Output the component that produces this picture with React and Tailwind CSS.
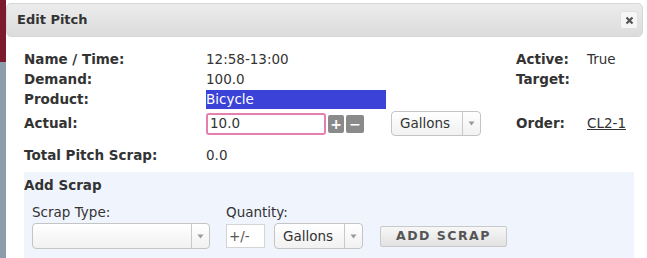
const font = { fontFamily: '"DejaVu Sans", Verdana, sans-serif' };

const Caret = () => (
  <div className="flex w-[18px] items-center justify-center self-stretch border-l border-[#c8c8c8]">
    <svg width="7" height="5" viewBox="0 0 7 5">
      <path d="M0.5 0.5h6L3.5 4.5z" fill="#9a9a9a" />
    </svg>
  </div>
);

const Select = ({ label, className }) => (
  <div
    className={`flex items-center rounded-[4px] border border-[#c4c4c4] bg-gradient-to-b from-white to-[#f1f1f1] ${className}`}
  >
    <span className="flex-1 pl-[8px] text-[13.5px] text-[#333]">{label}</span>
    <Caret />
  </div>
);

export default function App() {
  return (
    <div className="flex h-[258px] w-[647px] overflow-hidden bg-white" style={font}>
      {/* page behind the dialog */}
      <div className="flex w-[6px] flex-col">
        <div className="h-[62px] bg-[#7c1b2c]" />
        <div className="flex-1 bg-[#8d9cab]" />
      </div>

      <div className="flex flex-1 flex-col bg-white pt-[3px] pr-[4px]">
        {/* title bar */}
        <div className="flex h-[34px] items-center justify-between rounded-[5px] border border-[#d6d6d6] bg-gradient-to-b from-[#ececec] to-[#dcdcdc] pl-[10px] pr-[4px]">
          <span className="text-[13px] font-bold text-[#333]">Edit Pitch</span>
          <button className="flex h-[18px] w-[18px] items-center justify-center rounded-[3px] border border-[#e0e0e0] bg-[#f6f6f6]">
            <svg width="9" height="9" viewBox="0 0 9 9">
              <path d="M1.5 1.5l6 6M7.5 1.5l-6 6" stroke="#555" strokeWidth="2.2" />
            </svg>
          </button>
        </div>

        {/* info grid */}
        <div className="mt-[13px] grid grid-cols-[182px_184px_126px_71px_1fr] pl-[18px] text-[13.5px] text-[#333]">
          <div className="flex h-[19px] items-center font-bold">Name / Time:</div>
          <div className="flex h-[19px] items-center">12:58-13:00</div>
          <div />
          <div className="flex h-[19px] items-center font-bold">Active:</div>
          <div className="flex h-[19px] items-center">True</div>

          <div className="flex h-[20px] items-center font-bold">Demand:</div>
          <div className="flex h-[20px] items-center">100.0</div>
          <div />
          <div className="flex h-[20px] items-center font-bold">Target:</div>
          <div />

          <div className="flex h-[21px] items-center font-bold">Product:</div>
          <div className="flex h-[21px] items-center">
            <div className="flex h-[19px] w-[180px] items-center bg-[#3a42d8] text-white">Bicycle</div>
          </div>
          <div />
          <div />
          <div />

          <div className="flex h-[27px] items-center font-bold">Actual:</div>
          <div className="col-span-2 flex h-[27px] items-center">
            <div className="flex h-[22px] w-[120px] items-center rounded-[3px] border-2 border-[#e57fae] pl-[2px]">10.0</div>
            <div className="ml-[2px] flex gap-[2px]">
              <span className="flex h-[18px] w-[16px] items-center justify-center rounded-[2px] bg-[#8a8a8a] text-[14px] font-bold leading-none text-white">+</span>
              <span className="flex h-[18px] w-[18px] items-center justify-center rounded-[2px] bg-[#8a8a8a] text-[14px] font-bold leading-none text-white">−</span>
            </div>
            <Select label="Gallons" className="ml-[27px] h-[25px] w-[90px]" />
          </div>
          <div className="flex h-[27px] items-center font-bold">Order:</div>
          <div className="flex h-[27px] items-center underline">CL2-1</div>

          <div className="mt-[8px] flex h-[20px] items-center font-bold">Total Pitch Scrap:</div>
          <div className="mt-[8px] flex h-[20px] items-center">0.0</div>
        </div>

        {/* add scrap */}
        <div className="ml-[18px] mr-[9px] mt-[7px] flex-1 bg-[#f0f5fd] text-[13.5px] text-[#333]">
          <div className="pt-[3px] font-bold">Add Scrap</div>
          <div className="mt-[8px] flex items-end pl-[8px]">
            <div className="flex flex-col">
              <span className="leading-[18px]">Scrap Type:</span>
              <Select label="" className="mt-[2px] h-[26px] w-[178px]" />
            </div>
            <div className="ml-[16px] flex flex-col">
              <span className="leading-[18px]">Quantity:</span>
              <div className="mt-[2px] flex items-center">
                <div className="flex h-[24px] w-[39px] items-center border border-[#d4d4d4] bg-white pl-[2px] text-[#555]">+/-</div>
                <Select label="Gallons" className="ml-[9px] h-[26px] w-[89px]" />
                <button className="ml-[17px] flex h-[21px] w-[127px] items-center justify-center rounded-[2px] border border-[#c9c9c9] bg-gradient-to-b from-[#f7f7f7] to-[#e2e2e2] text-[12.5px] font-bold tracking-[1.5px] text-[#555]">
                  ADD SCRAP
                </button>
              </div>
            </div>
          </div>
        </div>
      </div>
    </div>
  );
}
